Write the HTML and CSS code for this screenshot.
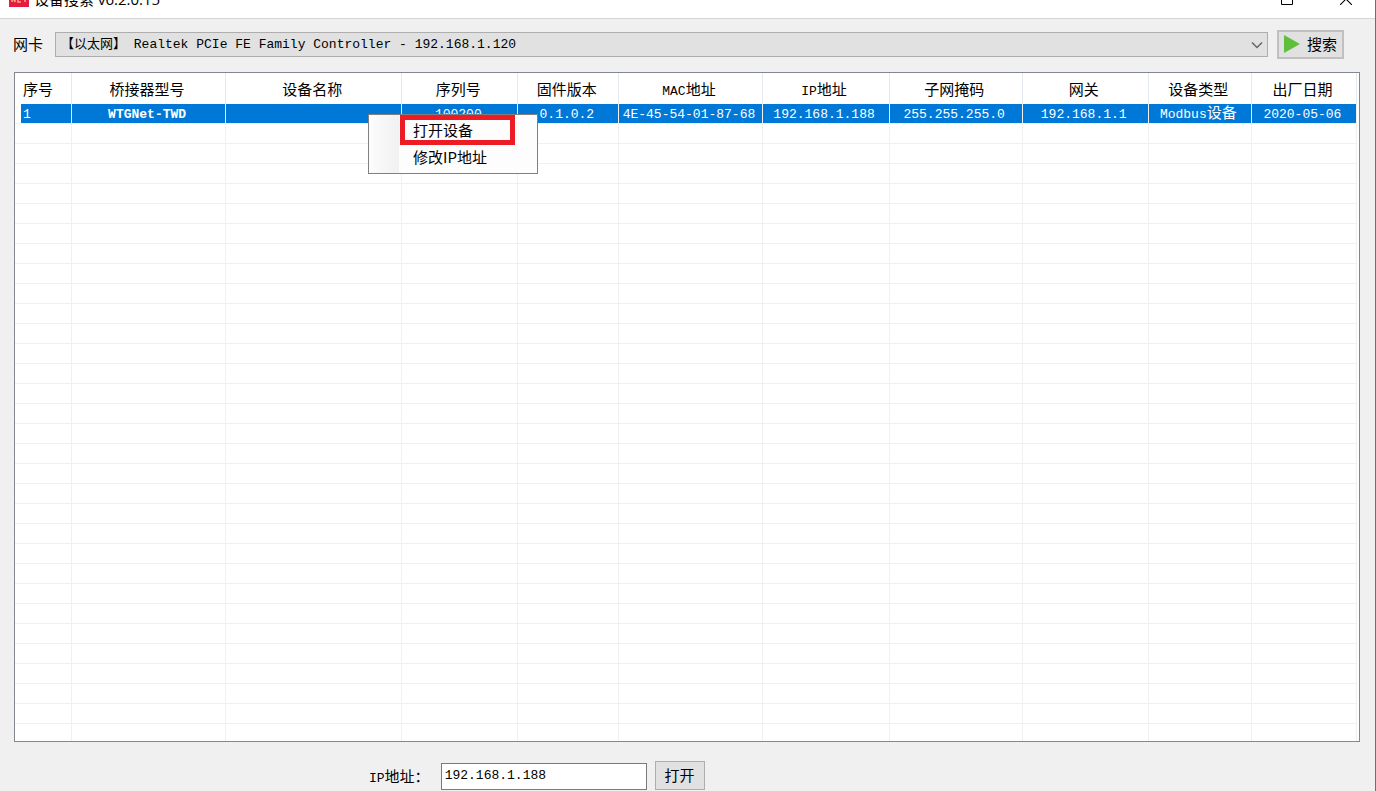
FILE: index.html
```
<!DOCTYPE html>
<html lang="zh-CN">
<head>
<meta charset="utf-8">
<title>设备搜索 v6.2.0.15</title>
<link rel="stylesheet" href="styles.css">
</head>
<body>
<div class="window">
  <header class="titlebar">
    <svg class="logo" width="20" height="20" viewBox="0 0 20 20" aria-hidden="true">
      <rect width="20" height="20" fill="#e51c40"/>
      <path d="M3 15V9l3 6V9M12 9H9v6h3M9 12h3M14 9h4M16 9v6" fill="none" stroke="#f6a07c" stroke-width="1.6"/>
    </svg>
    <h1 class="title">设备搜索 v6.2.0.15</h1>
    <button class="winbtn" type="button" aria-label="最大化"><svg width="12" height="12" viewBox="0 0 12 12"><path d="M.5.5h11v11H.5z" fill="none" stroke="#000"/></svg></button>
    <button class="winbtn" type="button" aria-label="关闭"><svg width="12" height="12" viewBox="0 0 12 12"><path d="M0 0l12 12M12 0L0 12" fill="none" stroke="#000" stroke-width="1.1"/></svg></button>
  </header>

  <main class="content">
    <form class="toolbar">
      <label for="nic">网卡</label>
      <div class="combo">
        <select id="nic"><option>【以太网】 Realtek PCIe FE Family Controller - 192.168.1.120</option></select>
        <svg class="chevron" width="12" height="8" viewBox="0 0 12 8" aria-hidden="true"><path d="M1 1.500l5 5 5-5" fill="none" stroke="#666" stroke-width="1.5"/></svg>
      </div>
      <button class="btn search" type="button"><svg width="16" height="18" viewBox="0 0 16 18" aria-hidden="true"><path d="M0 0l16 9-16 9z" fill="#5fbf3c"/></svg>搜索</button>
    </form>

    <div class="panel">
      <table class="grid">
        <colgroup><col class="c1"><col class="c2"><col class="c3"><col class="c4"><col class="c5"><col class="c6"><col class="c7"><col class="c8"><col class="c9"><col class="c10"><col class="c11"></colgroup>
        <thead><tr><th>序号</th><th>桥接器型号</th><th>设备名称</th><th>序列号</th><th>固件版本</th><th><span class="latin">MAC</span>地址</th><th><span class="latin">IP</span>地址</th><th>子网掩码</th><th>网关</th><th>设备类型</th><th>出厂日期</th></tr></thead>
        <tbody id="rows">
          <tr class="selected"><td>1</td><td class="model">WTGNet-TWD</td><td></td><td>100200</td><td>0.1.0.2</td><td>4E-45-54-01-87-68</td><td>192.168.1.188</td><td>255.255.255.0</td><td>192.168.1.1</td><td>Modbus<span class="han">设备</span></td><td>2020-05-06</td></tr>
        </tbody>
      </table>
      <div class="menu" role="menu">
        <button class="item marked" type="button" role="menuitem">打开设备</button>
        <button class="item" type="button" role="menuitem">修改IP地址</button>
      </div>
    </div>

    <form class="footer">
      <label for="ip"><span class="latin">IP</span>地址：</label>
      <input id="ip" type="text" value="192.168.1.188">
      <button class="btn open" type="button">打开</button>
    </form>
  </main>
</div>
<script src="rows.js"></script>
</body>
</html>
```
FILE: styles.css
```
* { box-sizing: border-box; }
body {
  margin: 0;
  color: #000;
  background: #f0f0f0;
  font: 15px/20px "Noto Sans CJK SC", sans-serif;
}
button, input, select { font: inherit; color: inherit; margin: 0; }
.window {
  height: 100vh;
  overflow: hidden;
  display: flex;
  flex-direction: column;
  border-right: 1px solid #2f7fb8;
}
.titlebar {
  flex: none;
  display: flex;
  align-items: center;
  height: 39px;
  margin-top: -20px;
  padding-left: 9px;
  background: #fff;
  border-bottom: 1px solid #d5d5d5;
}
.logo { margin-bottom: 4px; }
.title { flex: 1; margin: 0 0 0 5px; font: 15px/20px "Open Sans", "Noto Sans CJK SC", sans-serif; }
.winbtn {
  display: flex;
  align-items: center;
  justify-content: center;
  width: 59px;
  height: 34px;
  padding: 0;
  border: 0;
  background: none;
}
.content {
  flex: 1;
  min-height: 0;
  display: flex;
  flex-direction: column;
  padding: 11px 15px 0 14px;
}
.toolbar { display: flex; align-items: center; padding-right: 16px; margin-left: -1px; }
.toolbar label { padding-bottom: 2px; }
.combo { position: relative; flex: 1; margin: 0 9px 0 12px; }
.combo select {
  display: block;
  width: 100%;
  height: 25px;
  padding: 1px 24px 0 5px;
  appearance: none;
  border: 1px solid #adadad;
  border-radius: 0;
  background: #e1e1e1;
  font: 13px/20px "Liberation Mono", "Noto Sans CJK SC", monospace;
}
.chevron { position: absolute; right: 5px; top: 9px; pointer-events: none; }
.btn {
  display: flex;
  align-items: center;
  justify-content: center;
  height: 29px;
  padding: 0 0 2px;
  border: 1px solid #adadad;
  background: #e1e1e1;
}
.search { width: 67px; gap: 7px; border: 2px solid #c0c0c0; }
.panel {
  position: relative;
  flex: 1;
  min-height: 0;
  overflow: hidden;
  margin-top: 13px;
  padding-right: 2px;
  background: #fff;
  border: 1px solid #828790;
}
.grid { width: 100%; table-layout: fixed; border-collapse: separate; border-spacing: 0; }
.c1 { width: 57px; } .c2 { width: 154px; } .c3 { width: 176px; } .c4 { width: 116px; }
.c5 { width: 101px; } .c6 { width: 143px; } .c7 { width: 127px; } .c8 { width: 133px; }
.c9 { width: 126px; } .c10 { width: 103px; } .c11 { width: 105px; }
.grid th, .grid td {
  padding: 0 3px 0 0;
  text-align: center;
  white-space: nowrap;
  font-weight: normal;
  border-right: 1px solid #f0f0f0;
}
.grid th { height: 31px; border-color: #e3e9ee; }
.grid td {
  height: 20px;
  border-bottom: 1px solid #f0f0f0;
  font: 13px/17px "Liberation Mono", "Noto Sans CJK SC", monospace;
}
.grid th:first-child, .grid td:first-child { padding-left: 8px; text-align: left; }
.grid .selected td { padding-top: 2px; color: #fff; background: #0078d7; }
.grid .selected td:first-child { background: linear-gradient(to right, #fff 6px, #0078d7 6px); }
.grid .model { font-weight: bold; }
.latin { font-family: "Liberation Mono", monospace; font-size: 13px; line-height: 1; }
.han { font-size: 15px; line-height: 1; }
.menu {
  position: absolute;
  left: 353px;
  top: 41px;
  width: 170px;
  height: 60px;
  padding: 0 22px 0 31px;
  border: 1px solid #808080;
  background: linear-gradient(to right, #fcfcfc, #f1f1f1 30px, #fdfdfd 30px);
}
.item {
  display: block;
  width: 100%;
  height: 28px;
  padding: 0 13px 4px;
  border: 0;
  background: none;
  text-align: left;
}
.item.marked { height: 30px; padding: 0 8px 2px; border: 5px solid #ed1c24; }
.footer { flex: none; display: flex; align-items: center; height: 49px; padding: 19px 0 1px 355px; }
.footer input {
  width: 206px;
  height: 27px;
  margin: 1px 8px 0 11px;
  padding: 0 3px 2px;
  border: 1px solid #7a7a7a;
  background: #fff;
  font: 13px/20px "Liberation Mono", monospace;
}
.open { width: 50px; }
```
FILE: rows.js
```
const rows = document.getElementById("rows");
for (let i = 0; i < 31; i++) {
  const row = rows.insertRow();
  for (let c = 0; c < 11; c++) row.insertCell();
}
```
